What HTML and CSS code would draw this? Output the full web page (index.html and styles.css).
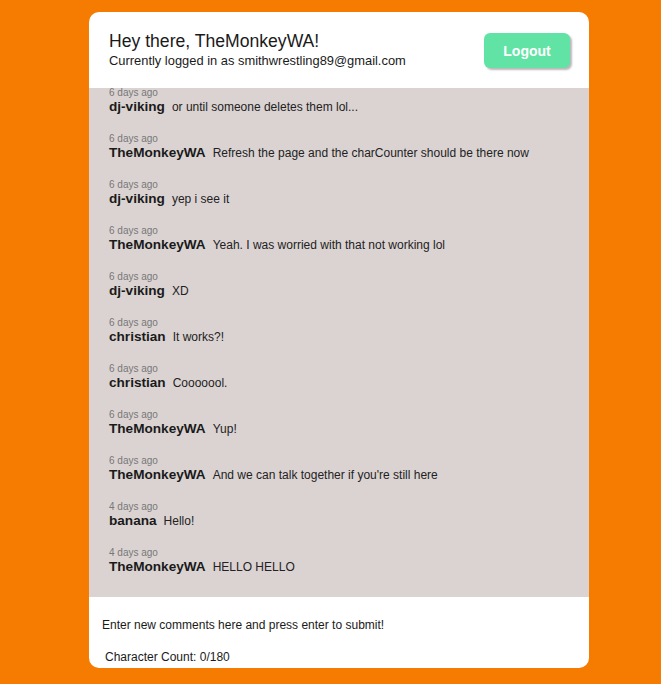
FILE: index.html
```html
<!DOCTYPE html>
<html>
<head>
<meta charset="utf-8">
<link rel="stylesheet" href="styles.css">
</head>
<body>
<div class="card">
  <header class="head">
    <div class="greet">
      <div class="title">Hey there, TheMonkeyWA!</div>
      <div class="sub">Currently logged in as smithwrestling89@gmail.com</div>
    </div>
    <button class="logout">Logout</button>
  </header>
  <main class="chat">
    <div class="msg"><div class="time">6 days ago</div><div class="line"><span class="user">dj-viking</span><span class="text">ok cool, the messages are saved</span></div></div>
    <div class="msg"><div class="time">6 days ago</div><div class="line"><span class="user">dj-viking</span><span class="text">or until someone deletes them lol...</span></div></div>
    <div class="msg"><div class="time">6 days ago</div><div class="line"><span class="user">TheMonkeyWA</span><span class="text">Refresh the page and the charCounter should be there now</span></div></div>
    <div class="msg"><div class="time">6 days ago</div><div class="line"><span class="user">dj-viking</span><span class="text">yep i see it</span></div></div>
    <div class="msg"><div class="time">6 days ago</div><div class="line"><span class="user">TheMonkeyWA</span><span class="text">Yeah. I was worried with that not working lol</span></div></div>
    <div class="msg"><div class="time">6 days ago</div><div class="line"><span class="user">dj-viking</span><span class="text">XD</span></div></div>
    <div class="msg"><div class="time">6 days ago</div><div class="line"><span class="user">christian</span><span class="text">It works?!</span></div></div>
    <div class="msg"><div class="time">6 days ago</div><div class="line"><span class="user">christian</span><span class="text">Cooooool.</span></div></div>
    <div class="msg"><div class="time">6 days ago</div><div class="line"><span class="user">TheMonkeyWA</span><span class="text">Yup!</span></div></div>
    <div class="msg"><div class="time">6 days ago</div><div class="line"><span class="user">TheMonkeyWA</span><span class="text">And we can talk together if you're still here</span></div></div>
    <div class="msg"><div class="time">4 days ago</div><div class="line"><span class="user">banana</span><span class="text">Hello!</span></div></div>
    <div class="msg"><div class="time">4 days ago</div><div class="line"><span class="user">TheMonkeyWA</span><span class="text">HELLO HELLO</span></div></div>
  </main>
  <footer class="foot">
    <input class="entry" type="text" placeholder="Enter new comments here and press enter to submit!">
    <div class="count">Character Count: 0/180</div>
  </footer>
</div>
</body>
</html>
```
FILE: styles.css
```css
html, body {
  margin: 0;
  padding: 0;
}
body {
  background: #f57c00;
  font-family: "Liberation Sans", Arial, sans-serif;
  color: #1a1a1a;
  height: 684px;
  overflow: hidden;
}
.card {
  width: 500px;
  margin: 12px 0 0 89px;
  background: #fff;
  border-radius: 10px;
  overflow: hidden;
  display: flex;
  flex-direction: column;
}
.head {
  height: 76px;
  box-sizing: border-box;
  padding: 0 19px 0 20px;
  display: flex;
  align-items: center;
  justify-content: space-between;
}
.greet {
  padding-bottom: 1px;
}
.title {
  font-size: 17.6px;
  line-height: 21px;
  color: #1a1a1a;
}
.sub {
  font-size: 12.9px;
  line-height: 17px;
  color: #1a1a1a;
}
.logout {
  width: 86px;
  height: 35px;
  border: none;
  border-radius: 6px;
  background: #60e3a5;
  color: #fff;
  font-family: "Liberation Sans", Arial, sans-serif;
  font-weight: bold;
  font-size: 14px;
  box-shadow: 2px 2px 2px #b9b9b9;
  margin-top: 1px;
  padding: 0;
}
.chat {
  height: 509px;
  background: #dbd3d2;
  overflow: hidden;
  display: flex;
  flex-direction: column;
  justify-content: flex-end;
  padding-bottom: 16px;
  box-sizing: border-box;
}
.msg {
  padding: 11px 20px 6px;
  flex-shrink: 0;
}
.time {
  font-size: 10px;
  line-height: 13px;
  color: #777;
}
.line {
  line-height: 16px;
  display: flex;
  align-items: baseline;
}
.user {
  font-weight: bold;
  font-size: 13.6px;
  color: #1a1a1a;
  margin-right: 7px;
}
.text {
  font-size: 12px;
  color: #222;
}
.foot {
  height: 71px;
  box-sizing: border-box;
  padding: 20px 0 0 13px;
}
.entry {
  display: block;
  border: none;
  outline: none;
  padding: 0;
  width: 470px;
  font-family: "Liberation Sans", Arial, sans-serif;
  font-size: 12px;
  line-height: 16px;
  height: 16px;
  background: transparent;
}
.entry::placeholder {
  color: #1a1a1a;
  opacity: 1;
}
.count {
  font-size: 12px;
  line-height: 16px;
  margin: 16px 0 0 3px;
  color: #1a1a1a;
}
```
